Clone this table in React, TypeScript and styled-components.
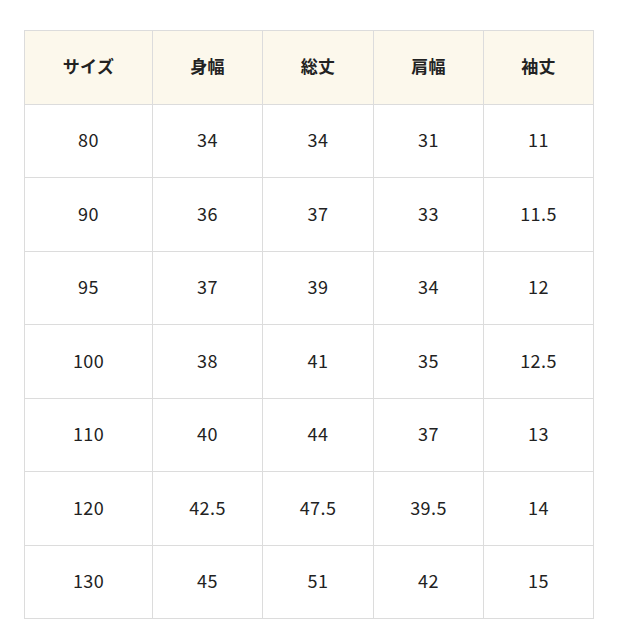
import React from "react";
import styled, { createGlobalStyle } from "styled-components";

const Global = createGlobalStyle`
  html, body { margin: 0; padding: 0; background: #fff; }
  body { font-family: "Noto Sans CJK JP", "Noto Sans", sans-serif; color: #222; }
`;

const Page = styled.div`
  padding: 30px 0 0 24px;
`;

const Table = styled.table`
  border-collapse: collapse;
  table-layout: fixed;
  width: 570px;
`;

const Cell = styled.td<{ $head?: boolean }>`
  border: 1px solid #dcdcdc;
  height: 73.5px;
  padding: 0 0 3px;
  box-sizing: border-box;
  text-align: center;
  vertical-align: middle;
  line-height: 1;
  font-size: ${(p) => (p.$head ? "17px" : "18px")};
  font-weight: ${(p) => (p.$head ? 700 : 400)};
  letter-spacing: ${(p) => (p.$head ? "0.3px" : "0.4px")};
  background: ${(p) => (p.$head ? "#fcf8ec" : "#fff")};
  color: #222;
`;

const headers = ["サイズ", "身幅", "総丈", "肩幅", "袖丈"];
const rows = [
  ["80", "34", "34", "31", "11"],
  ["90", "36", "37", "33", "11.5"],
  ["95", "37", "39", "34", "12"],
  ["100", "38", "41", "35", "12.5"],
  ["110", "40", "44", "37", "13"],
  ["120", "42.5", "47.5", "39.5", "14"],
  ["130", "45", "51", "42", "15"],
];
const widths = [128, 110, 111, 110, 110];

export default function App() {
  return (
    <>
      <Global />
      <Page>
        <Table>
          <colgroup>
            {widths.map((w, i) => (
              <col key={i} style={{ width: w }} />
            ))}
          </colgroup>
          <thead>
            <tr>
              {headers.map((h) => (
                <Cell as="th" $head key={h}>
                  {h}
                </Cell>
              ))}
            </tr>
          </thead>
          <tbody>
            {rows.map((r, i) => (
              <tr key={i}>
                {r.map((v, j) => (
                  <Cell key={j}>{v}</Cell>
                ))}
              </tr>
            ))}
          </tbody>
        </Table>
      </Page>
    </>
  );
}
